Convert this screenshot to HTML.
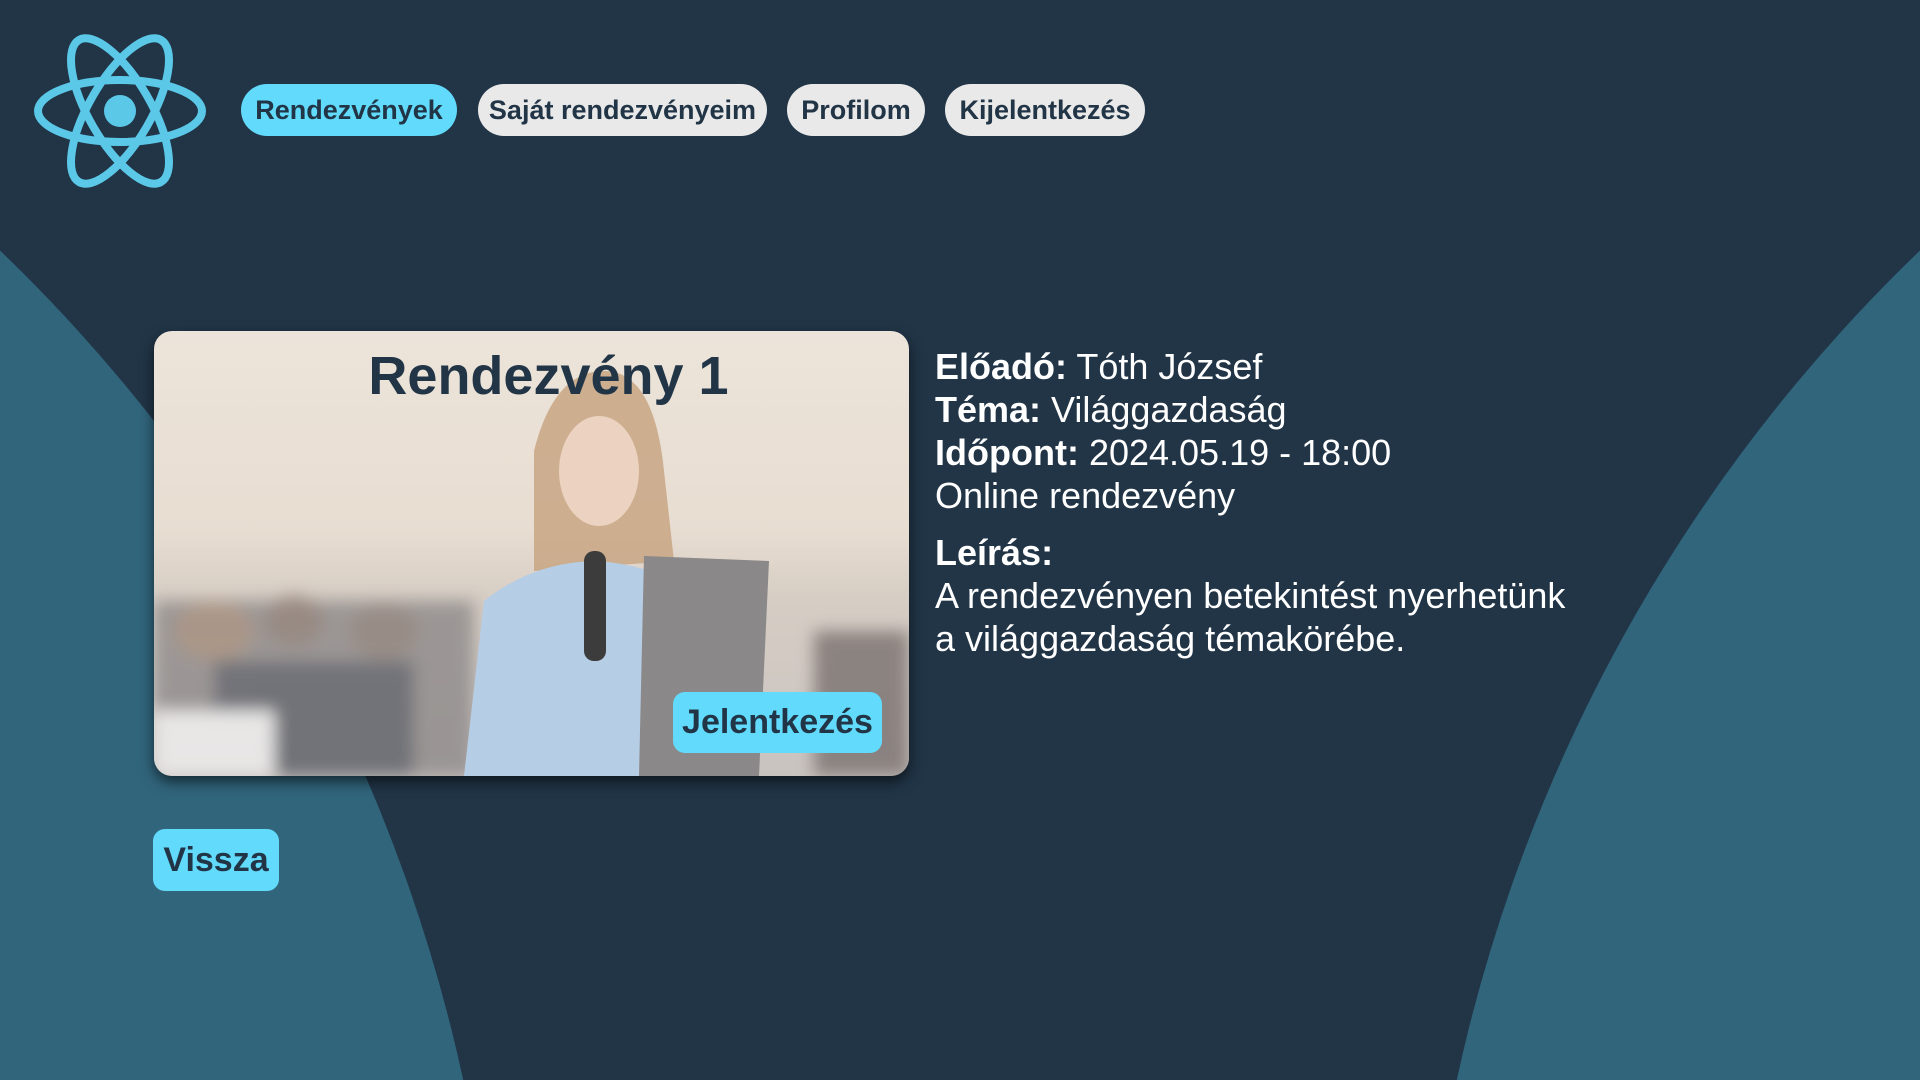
<!DOCTYPE html>
<html><head><meta charset="utf-8"><style>
*{margin:0;padding:0;box-sizing:border-box}
html,body{width:1920px;height:1080px;overflow:hidden}
body{background:#213547;font-family:"Liberation Sans",Arial,sans-serif}
#w{position:relative;width:1920px;height:1080px;overflow:hidden;background:#213547}
.circ{position:absolute;border-radius:50%;background:#31657c;width:3254px;height:3254px}
.nav{position:absolute;top:84px;height:52px;border-radius:26px;font-weight:bold;font-size:27px;color:#213547;display:flex;align-items:center;justify-content:center;background:#e9e9e9}
.card{position:absolute;left:154px;top:331px;width:755px;height:445px;border-radius:18px;overflow:hidden;box-shadow:0 6px 14px rgba(0,0,0,.6);
background:linear-gradient(180deg,#ece4da 0%,#e8ddd1 45%,#d6cdc4 60%,#c9c3c0 100%)}
.card .t{position:absolute;top:14px;left:17px;width:100%;text-align:center;font-size:54px;font-weight:bold;color:#213547}
.btn{position:absolute;background:#61dafb;color:#213547;font-weight:bold;display:flex;align-items:center;justify-content:center;border-radius:12px}
.info{position:absolute;left:935px;top:345px;color:#fff;font-size:36px;line-height:43px}
b{font-weight:bold}
</style></head><body><div id="w">
<div class="circ" style="left:-2754px;top:-203px"></div>
<div class="circ" style="left:1420px;top:-203px"></div>
<svg style="position:absolute;left:33px;top:33px" width="174" height="156" viewBox="-87 -78 174 156">
<g fill="none" stroke="#5bc8e8" stroke-width="8">
<ellipse rx="82" ry="31"/><ellipse rx="82" ry="31" transform="rotate(60)"/><ellipse rx="82" ry="31" transform="rotate(120)"/></g>
<circle r="16" fill="#5bc8e8"/></svg>
<div class="nav" style="left:241px;width:216px;background:#61dafb">Rendezvények</div>
<div class="nav" style="left:478px;width:289px">Saját rendezvényeim</div>
<div class="nav" style="left:787px;width:138px">Profilom</div>
<div class="nav" style="left:945px;width:200px">Kijelentkezés</div>
<div class="card">
<svg width="755" height="445" style="position:absolute;left:0;top:0">
<defs><filter id="b"><feGaussianBlur stdDeviation="8"/></filter></defs>
<g filter="url(#b)" opacity=".8">
<rect x="0" y="270" width="320" height="175" fill="#8e8a8a"/>
<ellipse cx="60" cy="300" rx="40" ry="30" fill="#a08a7a"/>
<ellipse cx="140" cy="290" rx="30" ry="25" fill="#8a7c74"/>
<ellipse cx="230" cy="300" rx="35" ry="28" fill="#8a7e78"/>
<rect x="60" y="330" width="200" height="115" fill="#5c5f68"/>
<rect x="0" y="380" width="120" height="65" fill="#efefef"/>
<rect x="660" y="300" width="95" height="145" fill="#7a7270"/>
</g>
<path d="M380 120 Q400 40 450 40 Q500 40 510 140 L520 230 L380 240Z" fill="#c8a684" opacity=".85"/>
<ellipse cx="445" cy="140" rx="40" ry="55" fill="#ecd2c0"/>
<path d="M310 445 L330 270 Q380 230 445 230 Q500 235 540 260 L560 445Z" fill="#b6cde6"/>
<rect x="430" y="220" width="22" height="110" rx="10" fill="#3c3c3c"/>
<path d="M490 225 L615 230 L605 445 L485 445Z" fill="#8a8888"/>
</svg>
<div class="t">Rendezvény 1</div>
<div class="btn" style="left:519px;top:361px;width:209px;height:61px;font-size:34px">Jelentkezés</div>
</div>
<div class="info">
<div><b>Előadó:</b> Tóth József</div>
<div><b>Téma:</b> Világgazdaság</div>
<div><b>Időpont:</b> 2024.05.19 - 18:00</div>
<div>Online rendezvény</div>
<div style="margin-top:14px"><b>Leírás:</b></div>
<div>A rendezvényen betekintést nyerhetünk<br>a világgazdaság témakörébe.</div>
</div>
<div class="btn" style="left:153px;top:829px;width:126px;height:62px;font-size:34px">Vissza</div>
</div></body></html>
